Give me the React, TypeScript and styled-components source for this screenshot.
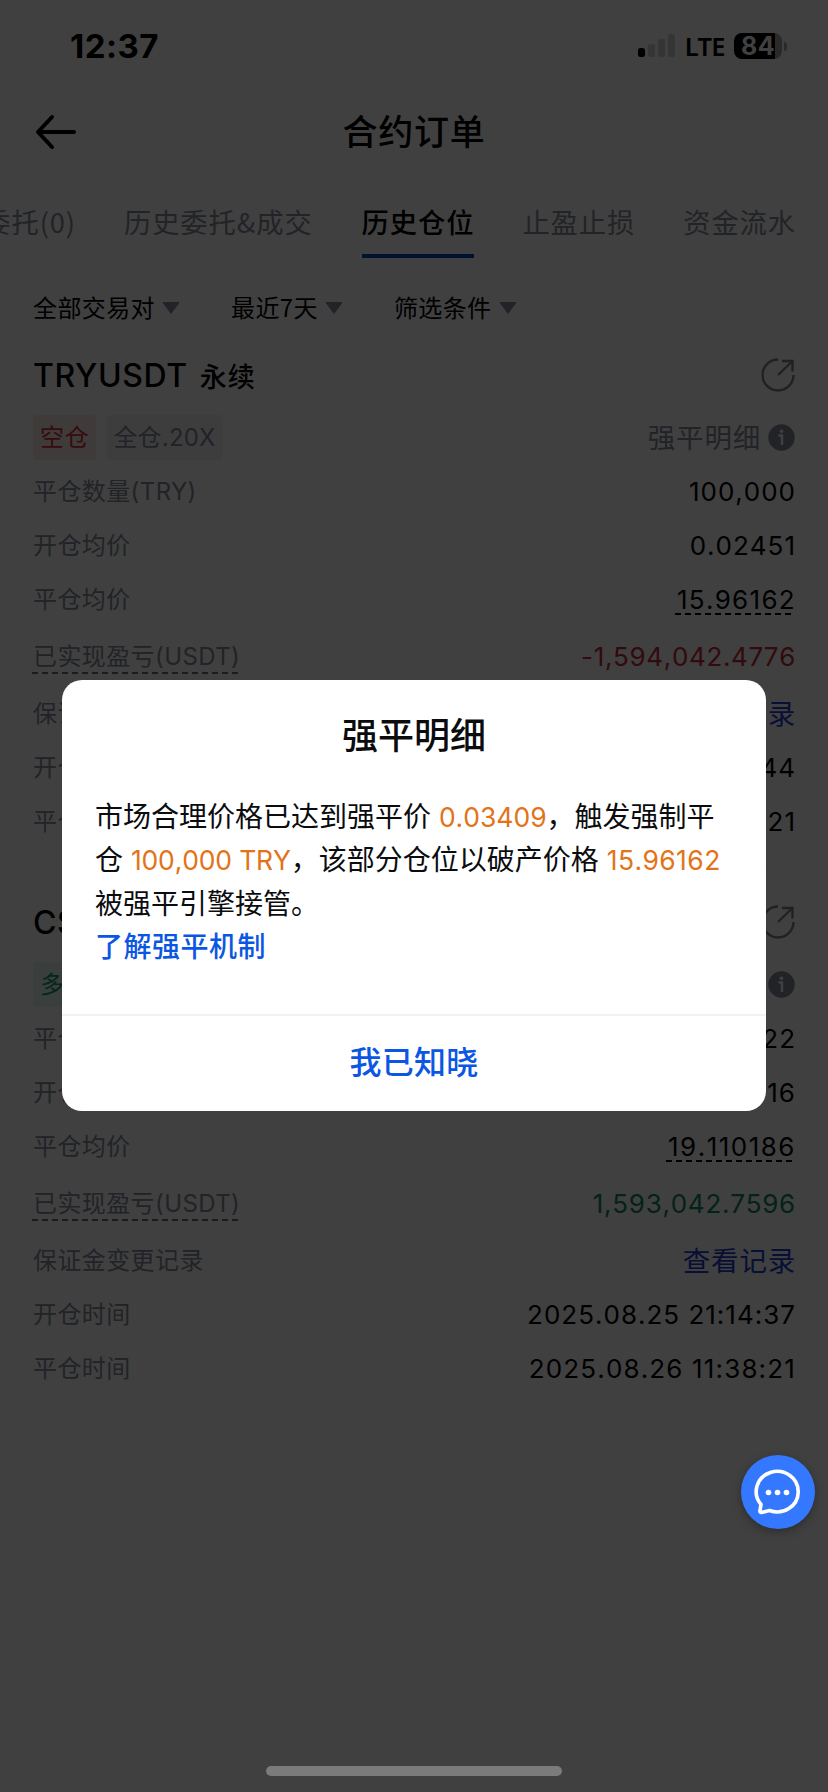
import React from "react";
import styled, { createGlobalStyle } from "styled-components";

const Global = createGlobalStyle`
  * { box-sizing: border-box; }
  html, body { margin: 0; padding: 0; background: #fff; }
  body { font-family: Inter, "Noto Sans CJK SC", sans-serif; color: #000; }
`;

const Screen = styled.div`
  position: relative;
  width: 828px;
  height: 1792px;
  overflow: hidden;
  background: #fff;
`;

const StatusBar = styled.header`
  display: flex;
  align-items: center;
  justify-content: space-between;
  height: 92px;
  padding: 0 41px 0 70px;
`;

const Clock = styled.span`
  font-size: 33px;
  font-weight: 700;
  letter-spacing: 0.5px;
`;

const StatusIcons = styled.div`
  display: flex;
  align-items: center;
  gap: 9px;
`;

const Network = styled.span`
  font: 600 25.5px/30px "Noto Sans", sans-serif;
  letter-spacing: -0.6px;
`;

const Battery = styled.div`
  display: flex;
  align-items: center;
  gap: 2px;
`;

const BatteryBody = styled.div`
  width: 48px;
  height: 26px;
  border-radius: 8px;
  background: linear-gradient(90deg, #000 0 41px, #a8a8a8 41px);
  color: #fff;
  font: 700 25px/26px Inter, sans-serif;
  padding-left: 7px;
  letter-spacing: 0.4px;
`;

const BatteryTip = styled.div`
  width: 3px;
  height: 9px;
  border-radius: 0 3px 3px 0;
  background: #a8a8a8;
`;

const NavBar = styled.nav`
  display: grid;
  grid-template-columns: 48px 1fr 48px;
  align-items: center;
  height: 82px;
  padding: 0 32px 2px;
`;

const NavTitle = styled.h1`
  margin: 0;
  text-align: center;
  font-size: 35px;
  line-height: 50px;
  font-weight: 500;
  letter-spacing: 0.8px;
`;

const Tabs = styled.div`
  display: flex;
  justify-content: flex-end;
  gap: 48px;
  height: 84px;
  padding-right: 32px;
  white-space: nowrap;
  font-family: "Noto Sans CJK SC", sans-serif;
`;

const Tab = styled.div<{ $active?: boolean }>`
  flex: none;
  height: 84px;
  padding-top: 25px;
  font-size: 27.3px;
  line-height: 44px;
  letter-spacing: 0.9px;
  font-weight: ${(p) => (p.$active ? 500 : 400)};
  color: ${(p) => (p.$active ? "#000" : "#878c9a")};
  border-bottom: 4px solid ${(p) => (p.$active ? "#0a45cc" : "transparent")};
  &:nth-child(2) { margin-right: 1px; }
`;

const Filters = styled.div`
  display: flex;
  align-items: center;
  gap: 51px;
  height: 90px;
  padding: 10px 33px 0;
`;

const Filter = styled.div`
  display: flex;
  align-items: center;
  gap: 7px;
  font-family: "Noto Sans CJK SC", sans-serif;
  font-size: 24px;
  line-height: 34px;
  letter-spacing: 0.4px;
`;

const FilterText = styled.span`
  padding-bottom: 3px;
`;

const Card = styled.section`
  padding: 0 33px 22px;
  margin-bottom: 24px;
  border-bottom: 1px solid #f8f8f9;
  &:last-child { border-bottom: 0; }
`;

const CardHead = styled.div`
  display: flex;
  align-items: center;
  justify-content: space-between;
  height: 54px;
`;

const Pair = styled.h2`
  display: flex;
  align-items: baseline;
  gap: 12px;
  margin: 0;
  font-size: 32px;
  font-weight: 500;
  letter-spacing: 0.6px;
`;

const Kind = styled.span`
  font-size: 27px;
  letter-spacing: 1px;
`;

const TagRow = styled.div`
  display: flex;
  align-items: center;
  gap: 10px;
  height: 62px;
  padding: 13px 0 4px;
`;

const tones = {
  short: ["#d8303c", "#fbeceb"],
  long: ["#0f9c66", "#e6f6f0"],
  plain: ["#878c9a", "#f2f3f8"],
} as const;

const Tag = styled.span<{ $tone: keyof typeof tones }>`
  height: 45px;
  padding: 0 7px;
  border-radius: 4px;
  font-size: 24px;
  line-height: 45px;
  letter-spacing: ${(p) => (p.$tone === "plain" ? 0.2 : 0.7)}px;
  color: ${(p) => tones[p.$tone][0]};
  background: ${(p) => tones[p.$tone][1]};
`;

const Detail = styled.div`
  display: flex;
  align-items: center;
  gap: 7px;
  margin-left: auto;
  color: #878c9a;
  font-size: 27.5px;
  line-height: 36px;
  letter-spacing: 0.8px;
`;

const Row = styled.div<{ $tall?: boolean }>`
  display: flex;
  align-items: center;
  justify-content: space-between;
  height: ${(p) => (p.$tall ? 60 : 54)}px;
  padding-top: ${(p) => (p.$tall ? 1 : 2)}px;
`;

const Dashes = styled.i<{ $color: string }>`
  display: block;
  height: 2px;
  background: repeating-linear-gradient(90deg, ${(p) => p.$color} 0 6px, transparent 6px 10px);
`;

const Label = styled.div`
  position: relative;
  font-size: 24px;
  line-height: 32px;
  letter-spacing: 0.4px;
  color: #878c9a;
  ${Dashes} { position: absolute; left: -1px; right: 0; bottom: -1px; }
`;

const Value = styled.div<{ $color?: string; $link?: boolean; $spacing: number }>`
  position: relative;
  font-size: ${(p) => (p.$link ? 27.5 : 26)}px;
  line-height: 32px;
  letter-spacing: ${(p) => p.$spacing}px;
  font-kerning: none;
  margin-right: -1px;
  color: ${(p) => p.$color ?? "#000"};
  ${Dashes} { position: absolute; left: -2px; right: 3px; bottom: 1px; }
`;

const Mask = styled.div`
  position: absolute;
  inset: 0;
  display: flex;
  justify-content: center;
  align-items: flex-start;
  padding-top: 680px;
  background: rgba(0, 0, 0, 0.75);
`;

const Dialog = styled.div`
  width: 704px;
  height: 431px;
  border-radius: 20px;
  background: #fff;
  display: flex;
  flex-direction: column;
`;

const DialogTitle = styled.h3`
  margin: 0;
  padding-top: 29px;
  text-align: center;
  font-size: 36px;
  line-height: 54px;
  font-weight: 500;
  color: #0b0c0e;
`;

const DialogBody = styled.div`
  flex: 1;
  padding: 33px 0 0 33px;
  font-size: 28px;
  line-height: 43.3px;
  color: #0b0c0e;
  white-space: nowrap;
`;

const Line = styled.p`
  margin: 0;
  height: 43.3px;
`;

const Amount = styled.span<{ $spacing?: number }>`
  color: #e37318;
  font-size: 26.5px;
  font-kerning: none;
  letter-spacing: ${(p) => p.$spacing ?? 0}px;
`;

const Learn = styled.a`
  color: #0b57e3;
  font-size: 28px;
  font-weight: 500;
  letter-spacing: 0.5px;
`;

const Confirm = styled.button`
  height: 97px;
  padding: 0 0 2px;
  border: 0;
  border-top: 2px solid #f2f2f3;
  background: none;
  font: inherit;
  font-size: 32px;
  line-height: 44px;
  font-weight: 500;
  letter-spacing: 0.3px;
  color: #0b57e3;
`;

const ChatButton = styled.button`
  position: absolute;
  left: 741px;
  top: 1455px;
  width: 74px;
  height: 74px;
  padding: 0;
  border: 0;
  border-radius: 50%;
  background: #3478ff;
  box-shadow: 0 3px 10px rgba(0, 0, 0, 0.3);
  svg { display: block; }
`;

const HomeBar = styled.div`
  position: absolute;
  left: 266px;
  bottom: 16px;
  width: 296px;
  height: 10px;
  border-radius: 5px;
  background: #7b7b7b;
`;

const Signal = () => (
  <svg width="38" height="24" viewBox="0 0 38 24">
    <rect x="0" y="14" width="7" height="9" rx="2.5" fill="#000" />
    <rect x="10" y="10" width="7" height="13" rx="2" fill="#d2d2d2" />
    <rect x="20" y="5" width="7" height="18" rx="2" fill="#d2d2d2" />
    <rect x="30" y="0" width="7" height="23" rx="2" fill="#d2d2d2" />
  </svg>
);

const Back = () => (
  <svg width="48" height="40" viewBox="0 0 48 40" fill="none" stroke="#000" strokeWidth="4" strokeLinecap="round" strokeLinejoin="round">
    <path d="M42 20H6M20 5L6 20L20 35" />
  </svg>
);

const Caret = () => (
  <svg width="18" height="12" viewBox="0 0 18 12">
    <path d="M1 0.5H17L9 11.5Z" fill="#878c9a" stroke="#878c9a" strokeLinejoin="round" />
  </svg>
);

const Share = () => (
  <svg width="34" height="34" viewBox="0 0 34 34" fill="none" stroke="#7d828f" strokeWidth="2.4">
    <path d="M17 1.5A15.5 15.5 0 1 0 32.5 17M17 17L31 3.5M21 3H31.5V13.5" />
  </svg>
);

const Info = () => (
  <svg width="27" height="27" viewBox="0 0 27 27">
    <circle cx="13.5" cy="13.5" r="13.2" fill="#878c9a" />
    <circle cx="13.5" cy="7.3" r="1.8" fill="#fff" />
    <path d="M10.5 11.5H14V21" stroke="#fff" strokeWidth="2.4" fill="none" />
  </svg>
);

const Chat = () => (
  <svg width="74" height="74" viewBox="0 0 74 74">
    <path d="M20 49.5A21 20.3 0 1 1 28.5 55.5L20.5 57.5Q18.5 57.5 19 55.5Z" fill="none" stroke="#fff" strokeWidth="3.6" strokeLinejoin="round" />
    <circle cx="27.5" cy="37.5" r="2.8" fill="#fff" />
    <circle cx="36.5" cy="37.5" r="2.8" fill="#fff" />
    <circle cx="45.5" cy="37.5" r="2.8" fill="#fff" />
  </svg>
);

type Item = { label: string; value: string; spacing?: number; color?: string; link?: boolean; dashLabel?: boolean; dashValue?: boolean };
type Position = { pair: string; kind?: string; side: string; tone: "short" | "long"; mode?: string; detail?: string; items: Item[] };

const positions: Position[] = [
  {
    pair: "TRYUSDT", kind: "永续", side: "空仓", tone: "short", mode: "全仓.20X", detail: "强平明细",
    items: [
      { label: "平仓数量(TRY)", value: "100,000" },
      { label: "开仓均价", value: "0.02451" },
      { label: "平仓均价", value: "15.96162", spacing: 1.3, dashValue: true },
      { label: "已实现盈亏(USDT)", value: "-1,594,042.4776", spacing: 0.65, color: "#c8283c", dashLabel: true },
      { label: "保证金变更记录", value: "查看记录", spacing: 0.8, color: "#1d3fd0", link: true },
      { label: "开仓时间", value: "44" },
      { label: "平仓时间", value: "21" },
    ],
  },
  {
    pair: "CS", side: "多仓", tone: "long",
    items: [
      { label: "平仓数量", value: "22" },
      { label: "开仓均价", value: "16" },
      { label: "平仓均价", value: "19.110186", spacing: 1.5, dashValue: true },
      { label: "已实现盈亏(USDT)", value: "1,593,042.7596", spacing: 0.75, color: "#0f8a5a", dashLabel: true },
      { label: "保证金变更记录", value: "查看记录", spacing: 0.8, color: "#1d3fd0", link: true },
      { label: "开仓时间", value: "2025.08.25 21:14:37" },
      { label: "平仓时间", value: "2025.08.26 11:38:21", spacing: 1.15 },
    ],
  },
];

const PositionCard = ({ p }: { p: Position }) => (
  <Card>
    <CardHead>
      <Pair>{p.pair}{p.kind && <Kind>{p.kind}</Kind>}</Pair>
      <Share />
    </CardHead>
    <TagRow>
      <Tag $tone={p.tone}>{p.side}</Tag>
      {p.mode && <Tag $tone="plain">{p.mode}</Tag>}
      <Detail>{p.detail}<Info /></Detail>
    </TagRow>
    {p.items.map((it) => (
      <Row key={it.label} $tall={it.dashLabel}>
        <Label>{it.label}{it.dashLabel && <Dashes $color="#6c707c" />}</Label>
        <Value $color={it.color} $link={it.link} $spacing={it.spacing ?? 1}>
          {it.value}{it.dashValue && <Dashes $color="#000" />}
        </Value>
      </Row>
    ))}
  </Card>
);

export default function App() {
  return (
    <Screen>
      <Global />
      <StatusBar>
        <Clock>12:37</Clock>
        <StatusIcons>
          <Signal />
          <Network>LTE</Network>
          <Battery><BatteryBody>84</BatteryBody><BatteryTip /></Battery>
        </StatusIcons>
      </StatusBar>
      <NavBar>
        <Back />
        <NavTitle>合约订单</NavTitle>
      </NavBar>
      <Tabs>
        <Tab>委托(0)</Tab>
        <Tab>历史委托&amp;成交</Tab>
        <Tab $active>历史仓位</Tab>
        <Tab>止盈止损</Tab>
        <Tab>资金流水</Tab>
      </Tabs>
      <Filters>
        <Filter><FilterText>全部交易对</FilterText><Caret /></Filter>
        <Filter><FilterText>最近7天</FilterText><Caret /></Filter>
        <Filter><FilterText>筛选条件</FilterText><Caret /></Filter>
      </Filters>
      <main>
        {positions.map((p) => <PositionCard key={p.pair} p={p} />)}
      </main>
      <Mask>
        <Dialog>
          <DialogTitle>强平明细</DialogTitle>
          <DialogBody>
            <Line>市场合理价格已达到强平价 <Amount>0.03409</Amount>，触发强制平</Line>
            <Line>仓 <Amount $spacing={-0.15}>100,000 TRY</Amount>，该部分仓位以破产价格 <Amount $spacing={0.4}>15.96162</Amount></Line>
            <Line>被强平引擎接管。</Line>
            <Line><Learn>了解强平机制</Learn></Line>
          </DialogBody>
          <Confirm>我已知晓</Confirm>
        </Dialog>
      </Mask>
      <ChatButton aria-label="chat"><Chat /></ChatButton>
      <HomeBar />
    </Screen>
  );
}
